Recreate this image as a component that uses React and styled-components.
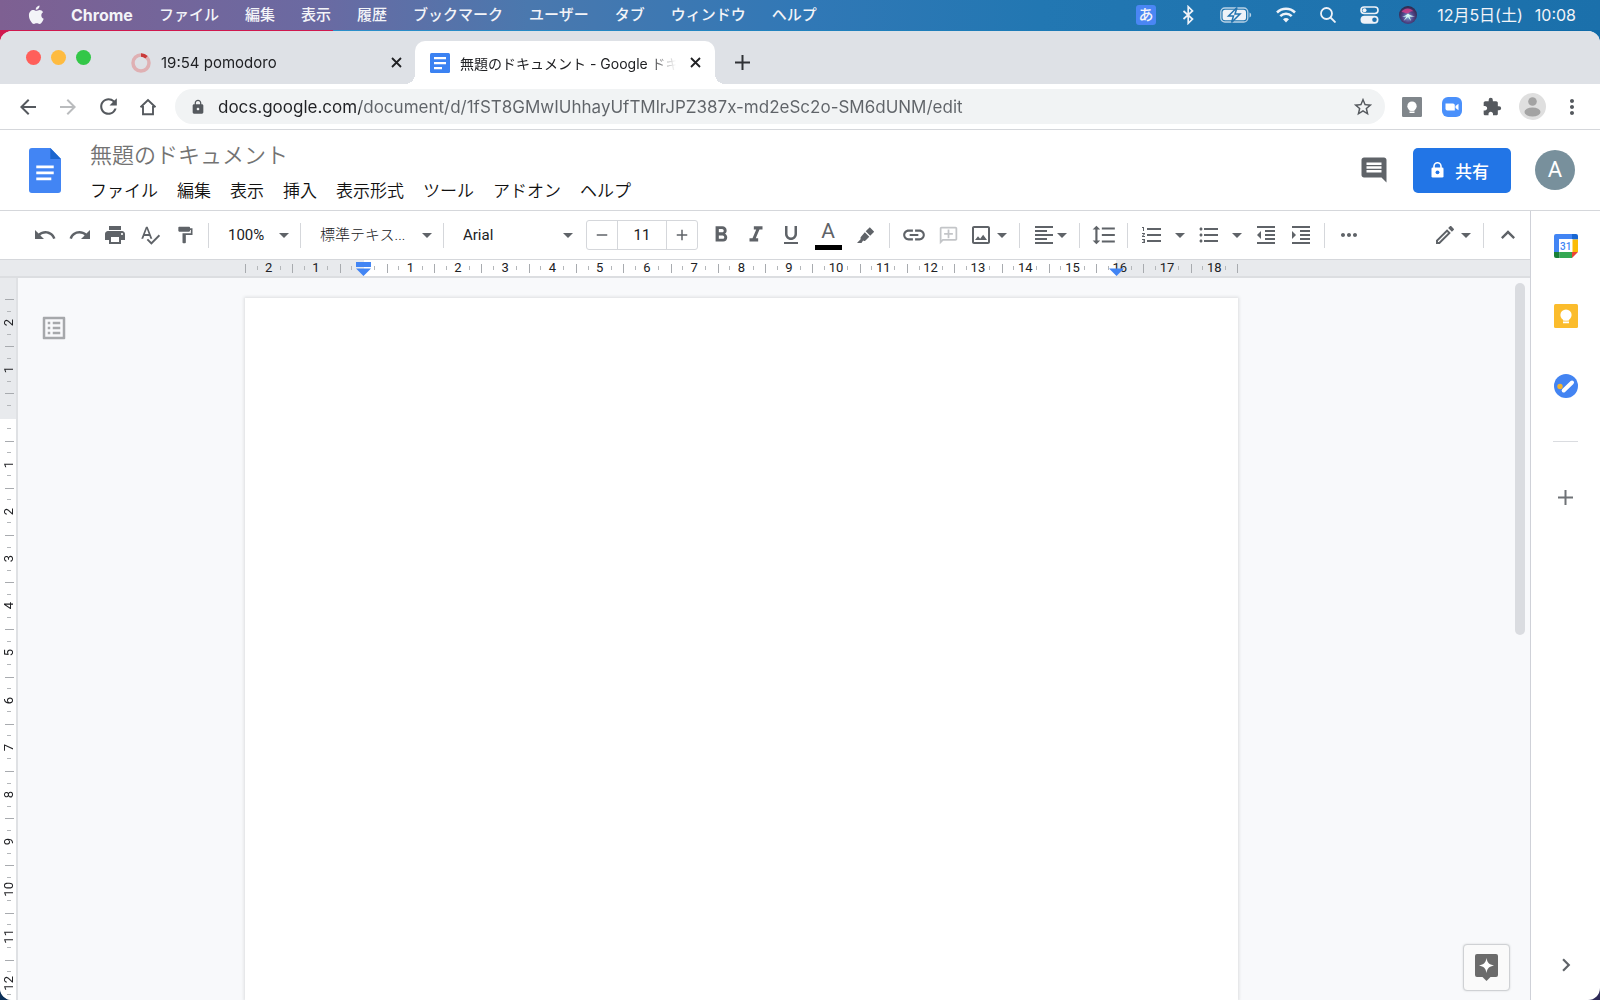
import React from 'react';
import styled, { createGlobalStyle } from 'styled-components';
import {
  MdAdd,
  MdArrowBack,
  MdArrowForward,
  MdExtension,
  MdFormatAlignLeft,
  MdFormatBold,
  MdFormatIndentDecrease,
  MdFormatIndentIncrease,
  MdFormatItalic,
  MdFormatLineSpacing,
  MdFormatListBulleted,
  MdFormatListNumbered,
  MdFormatPaint,
  MdFormatUnderlined,
  MdInsertComment,
  MdKeyboardArrowRight,
  MdKeyboardArrowUp,
  MdLink,
  MdLock,
  MdMoreHoriz,
  MdMoreVert,
  MdOutlineAddComment,
  MdOutlineEdit,
  MdOutlineImage,
  MdOutlineListAlt,
  MdPrint,
  MdRedo,
  MdRefresh,
  MdRemove,
  MdSpellcheck,
  MdStarOutline,
  MdUndo,
} from 'react-icons/md';

const uiFont = 'Inter, "Noto Sans CJK JP", sans-serif';
const docsFont = 'Roboto, "Noto Sans CJK JP", sans-serif';

const GlobalStyle = createGlobalStyle`
  * {
    box-sizing: border-box;
  }

  body {
    margin: 0;
    overflow: hidden;
    font-family: ${docsFont};
  }

  button,
  input,
  select {
    margin: 0;
    padding: 0;
    border: 0;
    background: none;
    color: inherit;
    font: inherit;
  }

  svg {
    display: block;
    flex: none;
  }
`;

const Desktop = styled.div`
  display: flex;
  flex-direction: column;
  height: 100vh;
  background:
    linear-gradient(90deg, #d0184e 333px, #2b8fca 333px, #0f6aa8 100%) 0 0 / 100% 50% no-repeat,
    linear-gradient(90deg, #0b3058, #2e2a58);
`;

/* macOS menu bar */

const MenuBar = styled.header`
  display: flex;
  align-items: center;
  justify-content: space-between;
  height: 30px;
  margin-bottom: 1px;
  padding: 0 24px 0 28px;
  background: linear-gradient(90deg, #7e6092 0%, #6a6aa2 20%, #4a78ae 33%, #3178b6 50%, #2277b2 65%, #1b70ab 100%);
  color: #f3f4f8;
  font-family: ${uiFont};
  font-size: 15px;
  font-weight: 500;
  white-space: nowrap;
`;

const MenuList = styled.nav`
  display: flex;
  align-items: center;
  gap: 26px;

  button {
    line-height: 30px;
  }

  button:first-of-type {
    font-size: 16px;
    font-weight: 700;
  }
`;

const StatusList = styled.div`
  display: flex;
  align-items: center;
  gap: ${({ $gap }) => $gap}px;
`;

const Clock = styled.div`
  display: flex;
  gap: 12px;
  font-size: 16px;
  font-weight: 400;
  line-height: 30px;
`;

const InputBadge = styled.span`
  width: 20px;
  border-radius: 3px;
  background: #4a86f4;
  font-size: 15px;
  line-height: 20px;
  text-align: center;
`;

/* browser frame */

const BrowserWindow = styled.div`
  display: flex;
  flex: 1;
  flex-direction: column;
  min-height: 0;
  overflow: hidden;
  border-radius: 12px;
  background: #fff;
`;

const TabStrip = styled.div`
  display: flex;
  align-items: flex-end;
  height: 53px;
  padding-left: 26px;
  background: #dee1e6;
  color: #202124;
  font-family: ${uiFont};
  font-size: 15px;
`;

const TrafficLights = styled.div`
  display: flex;
  align-self: center;
  gap: 10px;
  margin-right: 24px;
`;

const Light = styled.button`
  width: 15px;
  height: 15px;
  border-radius: 50%;
  background: ${({ $color }) => $color};
`;

const Tab = styled.div`
  position: relative;
  display: flex;
  align-items: center;
  gap: 10px;
  width: 300px;
  height: 43px;
  padding: ${({ $active }) => ($active ? '0 11px 0 15px' : '0 10px 0 16px')};
  border-radius: 10px 10px 0 0;
  background: ${({ $active }) => ($active ? '#fff' : 'transparent')};
  font-size: ${({ $active }) => ($active ? 14 : 15)}px;

  &::before,
  &::after {
    content: ${({ $active }) => ($active ? "''" : 'none')};
    position: absolute;
    bottom: 0;
    width: 10px;
    height: 10px;
  }

  &::before {
    right: 100%;
    background: radial-gradient(circle at 0 0, transparent 10px, #fff 10px);
  }

  &::after {
    left: 100%;
    background: radial-gradient(circle at 100% 0, transparent 10px, #fff 10px);
  }
`;

const TabTitle = styled.span`
  flex: 1;
  overflow: hidden;
  white-space: nowrap;
  mask-image: linear-gradient(90deg, #000 calc(100% - 28px), transparent);
`;

const CloseButton = styled.button`
  display: grid;
  place-items: center;
  width: 18px;
  height: 18px;
`;

const NewTab = styled.button`
  display: grid;
  place-items: center;
  width: 55px;
  height: 43px;
`;

const AddressRow = styled.div`
  display: flex;
  align-items: center;
  height: 46px;
  padding: 0 8px;
  border-bottom: 1px solid #d5d7db;
  color: #55595e;
`;

const NavButton = styled.button`
  display: grid;
  place-items: center;
  width: 40px;
  height: 40px;
  color: ${({ $muted }) => ($muted ? '#babcbe' : 'inherit')};
`;

const Omnibox = styled.div`
  display: flex;
  flex: 1;
  align-items: center;
  gap: 12px;
  height: 35px;
  margin: 0 7px;
  padding: 0 11px 0 15px;
  border-radius: 18px;
  background: #f1f3f4;

  /* host part is darker than the path */
  input {
    flex: 1;
    height: 35px;
    outline: none;
    background: linear-gradient(90deg, #202124 142px, #5f6368 142px);
    background-clip: text;
    color: transparent;
    font-family: ${uiFont};
    font-size: 17px;
  }
`;

const ProfileBubble = styled.span`
  display: block;
  overflow: hidden;
  width: 27px;
  height: 27px;
  border-radius: 50%;
  background: #dfdfdf;
`;

/* docs header */

const DocsHeader = styled.header`
  display: flex;
  align-items: center;
  height: 81px;
  padding: 0 25px 0 29px;
  border-bottom: 1px solid #d5d7db;
`;

const TitleBlock = styled.div`
  flex: 1;
  margin-left: 29px;
  padding-top: 4px;

  input {
    display: block;
    width: 320px;
    height: 38px;
    outline: none;
    color: #737373;
    font-size: 22px;
    font-weight: 350;
  }
`;

const DocsMenu = styled.nav`
  display: flex;
  gap: 19px;
  color: #111;
  font-size: 17px;
  font-weight: 350;
  line-height: 38px;
`;

const HeaderButton = styled.button`
  margin-right: 24px;
  color: #5f6368;
`;

const ShareButton = styled.button`
  display: flex;
  align-items: center;
  justify-content: center;
  gap: 11px;
  width: 98px;
  height: 45px;
  margin-right: 24px;
  padding-right: 4px;
  border-radius: 5px;
  background: #2275e6;
  color: #fff;
  font-size: 17px;
  font-weight: 500;
`;

const Account = styled.button`
  width: 40px;
  height: 40px;
  border-radius: 50%;
  background: #78909c;
  color: #fff;
  font-size: 22px;
  line-height: 40px;
`;

/* editor */

const Workspace = styled.div`
  display: flex;
  flex: 1;
  min-height: 0;
`;

const Editor = styled.main`
  display: flex;
  flex: 1;
  flex-direction: column;
  min-width: 0;
`;

const Toolbar = styled.div`
  display: flex;
  align-items: center;
  height: 49px;
  padding: 0 5px 0 27px;
  border-bottom: 1px solid #d5d7db;
  color: #5f6368;
  font-size: 15px;
`;

const ToolButton = styled.button`
  display: flex;
  flex-direction: column;
  align-items: center;
  justify-content: center;
  width: ${({ $wide }) => ($wide ? 40 : 35)}px;
  height: 35px;
  color: ${({ $muted }) => ($muted ? '#c3c5c8' : 'inherit')};
`;

const ToolMenu = styled.button`
  display: flex;
  align-items: center;
  justify-content: space-between;
  width: ${({ $wide }) => ($wide ? 57 : 47)}px;
  height: 35px;
  padding: 0 6px 0 ${({ $tight }) => ($tight ? 3 : 6)}px;
`;

const Divider = styled.span`
  width: 1px;
  height: 25px;
  margin: 0 6px;
  background: #d5d7db;
`;

const SelectBox = styled.label`
  display: flex;
  align-items: center;
  width: ${({ $width }) => $width}px;
  padding: 0 5px 0 13px;

  select {
    flex: 1;
    min-width: 0;
    height: 35px;
    appearance: none;
    outline: none;
    color: #202124;
    font-weight: ${({ $light }) => ($light ? 300 : 400)};
  }
`;

const SizeStepper = styled.div`
  display: flex;
  height: 30px;
  margin: 0 5px 0 8px;
  border: 1px solid #d5d7db;
  border-radius: 3px;

  button {
    display: grid;
    place-items: center;
    width: 30px;
  }

  input {
    width: 50px;
    border: solid #d5d7db;
    border-width: 0 1px;
    outline: none;
    color: #202124;
    text-align: center;
  }
`;

const TextColorLetter = styled.span`
  font-size: 21px;
  line-height: 20px;
`;

const ColorBar = styled.span`
  width: 27px;
  height: 5px;
  margin-top: 4px;
  background: #000;
`;

const Spacer = styled.span`
  flex: 1;
`;

const RulerStrip = styled.div`
  display: flex;
  justify-content: center;
  height: 18px;
  padding-right: 47px;
  border-bottom: 2px solid #dcdee1;
  background: #e8eaed;
`;

const RulerTrack = styled.div`
  position: relative;
  display: grid;
  grid-template-columns: repeat(21, 1fr);
  width: 993px;
  background:
    linear-gradient(#a8abaf, #a8abaf) 100% 50% / 1px 9px no-repeat,
    linear-gradient(90deg, #e8eaed 119px, #fff 119px, #fff 871px, #e8eaed 871px);
`;

const RulerCell = styled.span`
  display: flex;
  align-items: center;
  justify-content: center;
  background:
    linear-gradient(#a8abaf, #a8abaf) 0 50% / 1px 9px,
    linear-gradient(#b4b7ba, #b4b7ba) 25% 50% / 1px 4px,
    linear-gradient(#b4b7ba, #b4b7ba) 75% 50% / 1px 4px;
  background-repeat: no-repeat;
  color: #202124;
  font-size: 13px;
  line-height: 16px;
`;

const IndentMarker = styled.svg`
  position: absolute;
  bottom: 0;
  left: ${({ $at }) => $at}px;
`;

const CanvasRow = styled.div`
  display: flex;
  flex: 1;
  min-height: 0;
`;

const SideRuler = styled.div`
  width: 18px;
  overflow: hidden;
  padding: 21px 0 0 1px;
  border-right: 2px solid #dfe1e4;
  background: linear-gradient(#e8eaed 141px, #fff 141px);
`;

const SideTrack = styled.div`
  display: grid;
  grid-template-rows: repeat(15, 1fr);
  height: 708px;
`;

const SideCell = styled.span`
  display: flex;
  align-items: center;
  justify-content: center;
  background:
    linear-gradient(#a8abaf, #a8abaf) 50% 0 / 9px 1px,
    linear-gradient(#b4b7ba, #b4b7ba) 50% 25% / 4px 1px,
    linear-gradient(#b4b7ba, #b4b7ba) 50% 75% / 4px 1px;
  background-repeat: no-repeat;
  color: #202124;
  font-size: 13px;
  line-height: 16px;

  span {
    writing-mode: vertical-rl;
    transform: rotate(180deg);
  }
`;

const Canvas = styled.section`
  position: relative;
  display: flex;
  flex: 1;
  justify-content: center;
  padding: 20px 65px 0 0;
  background: #f8f9fb;
`;

const Page = styled.article`
  width: 993px;
  background: #fff;
  box-shadow: 0 0 3px 1px rgba(60, 64, 67, 0.14);
`;

const OutlineButton = styled.button`
  position: absolute;
  top: 35px;
  left: 21px;
  color: #a6a8ab;
`;

const ScrollThumb = styled.span`
  position: absolute;
  top: 5px;
  right: 5px;
  width: 10px;
  height: 352px;
  border-radius: 5px;
  background: #dadce0;
`;

const ExploreButton = styled.button`
  position: absolute;
  right: 20px;
  bottom: 9px;
  display: grid;
  place-items: center;
  width: 47px;
  height: 47px;
  border: 1px solid #cfd1d4;
  border-radius: 4px;
  background: #fafafa;
  box-shadow: 0 0 2px rgba(60, 64, 67, 0.2);
`;

const SidePanel = styled.aside`
  display: flex;
  flex-direction: column;
  align-items: center;
  width: 70px;
  padding: 12px 0 22px;
  border-left: 1px solid #cfd1d8;
  color: #5f6368;
`;

const PanelButton = styled.button`
  display: grid;
  place-items: center;
  width: 46px;
  height: 46px;
  margin-bottom: 24px;
`;

const PanelRule = styled.span`
  width: 25px;
  height: 1px;
  margin: 8px 0 32px;
  background: #dadce0;
`;

const PanelSpacer = styled.span`
  flex: 1;
`;

const AppleLogo = () => (
  <svg width="17" height="22" viewBox="0 0 18 22" fill="#f3f4f8">
    <path d="M12.2 1c.1 1.3-.4 2.400-1.100 3.200-.8.9-1.800 1.400-2.900 1.300-.1-1.200.4-2.300 1.100-3.100C10.100 1.600 11.200 1.100 12.200 1z" />
    <path d="M16 8.200c-1.200.8-1.900 1.900-1.900 3.300 0 1.600 1 3 2.500 3.600-.4 1.200-1 2.300-1.700 3.300-.8 1.100-1.600 2.100-2.800 2.100-1.200 0-1.500-.7-2.900-.7s-1.800.7-2.900.7c-1.200 0-2-1-2.800-2.100C2 16.400 1 13.800 1 11.400c0-3.500 2.300-5.600 4.600-5.600 1.300 0 2.300.8 3.200.8.8 0 2-.9 3.500-.9 1.400 0 2.800.7 3.700 2.500z" />
  </svg>
);

const BluetoothIcon = () => (
  <svg width="16" height="20" viewBox="0 0 16 20" fill="none" stroke="#eef2f8" strokeWidth="1.700">
    <path d="M3.500 6l9 8-4.300 4.300V1.700L12.500 6l-9 8" />
  </svg>
);

const BatteryIcon = () => (
  <svg width="32" height="18" viewBox="0 0 32 18" fill="none">
    <rect x="0.800" y="2" width="27" height="14" rx="4" stroke="#b9d2e6" strokeWidth="1.300" />
    <rect x="2.600" y="3.800" width="23.400" height="10.400" rx="2.500" fill="#eef2f8" />
    <path d="M29.500 6.500v5c2.200-.8 2.200-4.200 0-5z" fill="#b9d2e6" />
    <path d="M17 1.500L8.500 10h5l-2 6.500L20 8h-5z" fill="#eef2f8" stroke="#2474b0" strokeWidth="1.500" />
  </svg>
);

const WifiIcon = () => (
  <svg width="20" height="16" viewBox="0 0 20 16" fill="none" stroke="#eef2f8" strokeWidth="2.500">
    <path d="M1 5.500c5-5 13-5 18 0M4.300 9.200c3.200-3.200 8.200-3.200 11.400 0" />
    <path d="M10 15.500l-3-3.200c1.700-1.600 4.300-1.600 6 0z" fill="#eef2f8" stroke="none" />
  </svg>
);

const SearchIcon = () => (
  <svg width="16" height="16" viewBox="0 0 16 16" fill="none" stroke="#eef2f8" strokeWidth="1.800">
    <circle cx="6.500" cy="6.500" r="5.500" />
    <path d="M10.500 10.500l5 5" />
  </svg>
);

const ControlCenterIcon = () => (
  <svg width="19" height="18" viewBox="0 0 19 18" fill="none" stroke="#eef2f8">
    <rect x="1" y="1" width="17" height="6.500" rx="3.200" strokeWidth="1.600" />
    <circle cx="4.500" cy="4.200" r="2" fill="#eef2f8" stroke="none" />
    <rect x="0.500" y="9.700" width="18" height="8" rx="4" fill="#eef2f8" stroke="none" />
    <circle cx="14.500" cy="13.700" r="2.300" fill="#1f72ae" stroke="none" />
  </svg>
);

const SiriIcon = () => (
  <svg width="18" height="18" viewBox="0 0 18 18">
    <defs>
      <radialGradient id="siri" cx="50%" cy="60%" r="60%">
        <stop offset="0" stopColor="#7fb4dc" />
        <stop offset="0.500" stopColor="#51468a" />
        <stop offset="1" stopColor="#2d2444" />
      </radialGradient>
    </defs>
    <circle cx="9" cy="9" r="9" fill="url(#siri)" />
    <path d="M2.500 6c2-4 9-5 12-.5-3-1-4 1.500-6 2-2 0-4-1.500-6-1.500z" fill="#d8418c" opacity="0.800" />
    <path d="M9 7.500c2 2 4.500 2.500 7 2.500-2.500 1-4 .8-5.500.5L12 15l-3-4-4.500 4L7.500 10.500 3 11c2.500-.8 4.500-2 6-3.500z" fill="#d4f7f4" />
  </svg>
);

const ProgressRing = () => (
  <svg width="20" height="20" viewBox="0 0 20 20" fill="none" strokeWidth="3.500">
    <circle cx="10" cy="10" r="8" stroke="#dfb0b3" />
    <path d="M10 2a8 8 0 0 1 5.500 2.200" stroke="#c93a3a" />
  </svg>
);

const DocsFavicon = () => (
  <svg width="20" height="20" viewBox="0 0 20 20">
    <rect width="20" height="20" rx="1.500" fill="#3b82f2" />
    <path d="M4 4h12v2.200H4zM4 9h12v2.200H4zM4 14h8v2.200H4z" fill="#fff" />
  </svg>
);

const CrossIcon = () => (
  <svg width="11" height="11" viewBox="0 0 11 11" stroke="#202124" strokeWidth="1.800">
    <path d="M1 1l9 9M10 1l-9 9" />
  </svg>
);

const PlusIcon = ({ color, weight }) => (
  <svg width="15" height="15" viewBox="0 0 15 15" stroke={color} strokeWidth={weight}>
    <path d="M7.500 0v15M0 7.500h15" />
  </svg>
);

const HomeIcon = () => (
  <svg width="18" height="18" viewBox="0 0 18 18" fill="none" stroke="currentColor" strokeWidth="1.900">
    <path d="M1.500 9.300L9 2l7.500 7.300M4 8v8.200h10V8" />
  </svg>
);

const KeepIcon = ({ size, color }) => (
  <svg width={size} height={size} viewBox="0 0 24 24">
    <rect width="24" height="24" rx="1.500" fill={color} />
    <circle cx="12" cy="11" r="5.600" fill="#fff" />
    <path d="M9 14h6v2.500H9zM9 17.500h6v1.800H9z" fill="#fff" />
  </svg>
);

const ZoomIcon = () => (
  <svg width="20" height="20" viewBox="0 0 20 20">
    <rect width="20" height="20" rx="6" fill="#4a90fb" />
    <path d="M3.500 6.500h7.500a1.800 1.800 0 0 1 1.800 1.800v5.200H5.300a1.800 1.800 0 0 1-1.800-1.800zM13.500 9l3-2.300v6.600l-3-2.300z" fill="#fff" />
  </svg>
);

const DocsLogo = () => (
  <svg width="32" height="45" viewBox="0 0 33 45" preserveAspectRatio="none">
    <path d="M3 0h19l11 11v31a3 3 0 0 1-3 3H3a3 3 0 0 1-3-3V3a3 3 0 0 1 3-3z" fill="#4285f4" />
    <path d="M22 0l11 11H22z" fill="#1c66cf" />
    <path d="M7.500 17.500h18v2.800h-18zM7.500 23.500h18v2.800h-18zM7.500 29.500h15.500v2.800H7.500z" fill="#fff" />
  </svg>
);

const ShareLock = () => (
  <svg width="13" height="16" viewBox="0 0 13 16">
    <rect x="0.500" y="5.500" width="12" height="10" rx="1.300" fill="#fff" />
    <path d="M3 6V4.300a3.500 3.500 0 0 1 7 0V6" fill="none" stroke="#fff" strokeWidth="1.600" />
    <circle cx="6.500" cy="10.300" r="1.900" fill="#2275e6" />
  </svg>
);

const HighlighterIcon = () => (
  <svg width="18" height="17" viewBox="0 0 18 17" fill="currentColor">
    <path d="M12.800.3l4.400 4.400-4 4-4.500-4.400zM7.800 5.200l4.500 4.500-3.800 3.700c-.7.700-1.700.7-2.400.2L4.500 16H0l3.800-3.900c-.5-.7-.4-1.600.2-2.300z" />
  </svg>
);

const Caret = () => (
  <svg width="10" height="5" viewBox="0 0 10 5" fill="currentColor">
    <path d="M0 0h10L5 5z" />
  </svg>
);

const CalendarIcon = () => (
  <svg width="24" height="24" viewBox="0 0 24 24">
    <path d="M2 0h16v5.500H5.500V18H0V2a2 2 0 0 1 2-2z" fill="#4285f4" />
    <path d="M18 0h4a2 2 0 0 1 2 2v3.500h-6z" fill="#1967d2" />
    <path d="M18 5.500h6V18h-6z" fill="#fbbc04" />
    <path d="M5.500 18H18v6H5.500z" fill="#34a853" />
    <path d="M0 18h5.500v6H2a2 2 0 0 1-2-2z" fill="#188038" />
    <path d="M18 18h6l-6 6z" fill="#ea4335" />
    <path d="M5 5h13.500v13H5z" fill="#fff" />
    <text x="11.800" y="15.500" fill="#4285f4" fontFamily="Roboto, sans-serif" fontSize="10" fontWeight="500" textAnchor="middle">
      31
    </text>
  </svg>
);

const TasksIcon = () => (
  <svg width="24" height="24" viewBox="0 0 24 24">
    <circle cx="12" cy="12" r="12" fill="#4384f2" />
    <circle cx="6" cy="12.500" r="2.700" fill="#f6b42c" />
    <path d="M9.700 16.500l8.300-8" stroke="#fff" strokeWidth="4" strokeLinecap="round" />
  </svg>
);

const ExploreIcon = () => (
  <svg width="23" height="27" viewBox="0 0 23 27">
    <path d="M2 0h19a2 2 0 0 1 2 2v19a2 2 0 0 1-2 2h-5.500l-4 4-4-4H2a2 2 0 0 1-2-2V2a2 2 0 0 1 2-2z" fill="#6b6b6b" />
    <path d="M11.500 4c1 5 2.500 6.500 7.500 7.500-5 1-6.500 2.500-7.500 7.500-1-5-2.500-6.500-7.500-7.500 5-1 6.500-2.500 7.500-7.500z" fill="#fff" />
  </svg>
);

const systemMenus = [
  'Chrome',
  'ファイル',
  '編集',
  '表示',
  '履歴',
  'ブックマーク',
  'ユーザー',
  'タブ',
  'ウィンドウ',
  'ヘルプ',
];

const docsMenus = ['ファイル', '編集', '表示', '挿入', '表示形式', 'ツール', 'アドオン', 'ヘルプ'];

// one entry per centimetre, the margin side counts down to the zero mark
const centimetres = Array.from({ length: 21 }, (_, i) => Math.abs(i - 2) || '');

const SystemBar = () => (
  <MenuBar>
    <MenuList>
      <AppleLogo />
      {systemMenus.map(name => (
        <button key={name}>{name}</button>
      ))}
    </MenuList>
    <StatusList $gap={24}>
      <InputBadge>あ</InputBadge>
      <BluetoothIcon />
      <BatteryIcon />
      <WifiIcon />
      <SearchIcon />
      <StatusList $gap={20}>
        <ControlCenterIcon />
        <SiriIcon />
        <Clock>
          <span>12月5日(土)</span>
          <span>10:08</span>
        </Clock>
      </StatusList>
    </StatusList>
  </MenuBar>
);

const BrowserChrome = () => (
  <>
    <TabStrip>
      <TrafficLights>
        <Light $color="#ff5f5a" aria-label="閉じる" />
        <Light $color="#febb40" aria-label="しまう" />
        <Light $color="#33c748" aria-label="拡大" />
      </TrafficLights>
      <Tab>
        <ProgressRing />
        <TabTitle>19:54 pomodoro</TabTitle>
        <CloseButton aria-label="タブを閉じる">
          <CrossIcon />
        </CloseButton>
      </Tab>
      <Tab $active>
        <DocsFavicon />
        <TabTitle>無題のドキュメント - Google ドキ</TabTitle>
        <CloseButton aria-label="タブを閉じる">
          <CrossIcon />
        </CloseButton>
      </Tab>
      <NewTab aria-label="新しいタブ">
        <PlusIcon color="#303236" weight={2} />
      </NewTab>
    </TabStrip>
    <AddressRow>
      <NavButton aria-label="戻る">
        <MdArrowBack size={24} />
      </NavButton>
      <NavButton $muted aria-label="進む">
        <MdArrowForward size={24} />
      </NavButton>
      <NavButton aria-label="再読み込み">
        <MdRefresh size={25} />
      </NavButton>
      <NavButton aria-label="ホーム">
        <HomeIcon />
      </NavButton>
      <Omnibox>
        <MdLock size={16} />
        <input
          aria-label="アドレス"
          defaultValue="docs.google.com/document/d/1fST8GMwIUhhayUfTMlrJPZ387x-md2eSc2o-SM6dUNM/edit"
        />
        <MdStarOutline size={22} />
      </Omnibox>
      <NavButton aria-label="Google Keep">
        <KeepIcon size={20} color="#80868b" />
      </NavButton>
      <NavButton aria-label="Zoom">
        <ZoomIcon />
      </NavButton>
      <NavButton aria-label="拡張機能">
        <MdExtension size={20} />
      </NavButton>
      <NavButton aria-label="プロフィール">
        <ProfileBubble>
          <svg width="27" height="27" viewBox="0 0 27 27" fill="#a3a3a3">
            <circle cx="13.500" cy="8.500" r="4.300" />
            <ellipse cx="13.500" cy="19" rx="8" ry="4.500" />
          </svg>
        </ProfileBubble>
      </NavButton>
      <NavButton aria-label="メニュー">
        <MdMoreVert size={24} />
      </NavButton>
    </AddressRow>
  </>
);

const EditorToolbar = () => (
  <Toolbar>
    <ToolButton aria-label="元に戻す">
      <MdUndo size={24} />
    </ToolButton>
    <ToolButton aria-label="やり直し">
      <MdRedo size={24} />
    </ToolButton>
    <ToolButton aria-label="印刷">
      <MdPrint size={24} />
    </ToolButton>
    <ToolButton aria-label="スペルチェック">
      <MdSpellcheck size={22} />
    </ToolButton>
    <ToolButton aria-label="書式を貼り付け">
      <MdFormatPaint size={20} />
    </ToolButton>
    <Divider />
    <SelectBox $width={79}>
      <select aria-label="ズーム">
        <option>100%</option>
      </select>
      <Caret />
    </SelectBox>
    <Divider />
    <SelectBox $width={130} $light>
      <select aria-label="スタイル">
        <option>標準テキス...</option>
      </select>
      <Caret />
    </SelectBox>
    <Divider />
    <SelectBox $width={128}>
      <select aria-label="フォント">
        <option>Arial</option>
      </select>
      <Caret />
    </SelectBox>
    <SizeStepper>
      <button aria-label="縮小">
        <MdRemove size={18} />
      </button>
      <input aria-label="フォントサイズ" defaultValue="11" />
      <button aria-label="拡大">
        <MdAdd size={18} />
      </button>
    </SizeStepper>
    <ToolButton aria-label="太字">
      <MdFormatBold size={26} />
    </ToolButton>
    <ToolButton aria-label="斜体">
      <MdFormatItalic size={26} />
    </ToolButton>
    <ToolButton aria-label="下線">
      <MdFormatUnderlined size={24} />
    </ToolButton>
    <ToolButton $wide aria-label="テキストの色">
      <TextColorLetter>A</TextColorLetter>
      <ColorBar />
    </ToolButton>
    <ToolButton aria-label="ハイライト">
      <HighlighterIcon />
    </ToolButton>
    <Divider />
    <ToolButton aria-label="リンク">
      <MdLink size={26} />
    </ToolButton>
    <ToolButton $muted aria-label="コメントを追加">
      <MdOutlineAddComment size={21} transform="scale(-1 1)" />
    </ToolButton>
    <ToolMenu $tight aria-label="画像">
      <MdOutlineImage size={24} />
      <Caret />
    </ToolMenu>
    <Divider />
    <ToolMenu aria-label="配置">
      <MdFormatAlignLeft size={24} />
      <Caret />
    </ToolMenu>
    <Divider />
    <ToolButton aria-label="行間隔">
      <MdFormatLineSpacing size={26} />
    </ToolButton>
    <Divider />
    <ToolMenu $wide aria-label="番号付きリスト">
      <MdFormatListNumbered size={24} />
      <Caret />
    </ToolMenu>
    <ToolMenu $wide aria-label="箇条書き">
      <MdFormatListBulleted size={24} />
      <Caret />
    </ToolMenu>
    <ToolButton aria-label="インデント減">
      <MdFormatIndentDecrease size={24} />
    </ToolButton>
    <ToolButton aria-label="インデント増">
      <MdFormatIndentIncrease size={24} />
    </ToolButton>
    <Divider />
    <ToolButton aria-label="その他">
      <MdMoreHoriz size={24} />
    </ToolButton>
    <Spacer />
    <ToolMenu $tight aria-label="編集モード">
      <MdOutlineEdit size={24} />
      <Caret />
    </ToolMenu>
    <Divider />
    <ToolButton aria-label="メニューを非表示">
      <MdKeyboardArrowUp size={28} />
    </ToolButton>
  </Toolbar>
);

const App = () => (
  <Desktop>
    <GlobalStyle />
    <SystemBar />
    <BrowserWindow>
      <BrowserChrome />
      <DocsHeader>
        <DocsLogo />
        <TitleBlock>
          <input aria-label="ドキュメント名" defaultValue="無題のドキュメント" />
          <DocsMenu>
            {docsMenus.map(name => (
              <button key={name}>{name}</button>
            ))}
          </DocsMenu>
        </TitleBlock>
        <HeaderButton aria-label="コメント履歴">
          <MdInsertComment size={30} />
        </HeaderButton>
        <ShareButton>
          <ShareLock />
          共有
        </ShareButton>
        <Account>A</Account>
      </DocsHeader>
      <Workspace>
        <Editor>
          <EditorToolbar />
          <RulerStrip>
            <RulerTrack>
              {centimetres.map((label, i) => (
                <RulerCell key={i}>{label}</RulerCell>
              ))}
              <IndentMarker $at={111} width="15" height="14" viewBox="0 0 15 14" fill="#4285f4">
                <path d="M0 0h15v5H0zM0 6.500h15L7.500 14z" />
              </IndentMarker>
              <IndentMarker $at={864} width="15" height="14" viewBox="0 0 15 14" fill="#4285f4">
                <path d="M0 6.500h15L7.500 14z" />
              </IndentMarker>
            </RulerTrack>
          </RulerStrip>
          <CanvasRow>
            <SideRuler>
              <SideTrack>
                {centimetres.slice(0, 15).map((label, i) => (
                  <SideCell key={i}>
                    <span>{label}</span>
                  </SideCell>
                ))}
              </SideTrack>
            </SideRuler>
            <Canvas>
              <OutlineButton aria-label="ドキュメントの概要を表示">
                <MdOutlineListAlt size={30} />
              </OutlineButton>
              <Page />
              <ScrollThumb />
              <ExploreButton aria-label="データ探索">
                <ExploreIcon />
              </ExploreButton>
            </Canvas>
          </CanvasRow>
        </Editor>
        <SidePanel>
          <PanelButton aria-label="カレンダー">
            <CalendarIcon />
          </PanelButton>
          <PanelButton aria-label="Keep">
            <KeepIcon size={24} color="#fbbc2c" />
          </PanelButton>
          <PanelButton aria-label="ToDo リスト">
            <TasksIcon />
          </PanelButton>
          <PanelRule />
          <PanelButton aria-label="アドオンを取得">
            <PlusIcon color="#6f7276" weight={2} />
          </PanelButton>
          <PanelSpacer />
          <MdKeyboardArrowRight size={26} />
        </SidePanel>
      </Workspace>
    </BrowserWindow>
  </Desktop>
);

export default App;
